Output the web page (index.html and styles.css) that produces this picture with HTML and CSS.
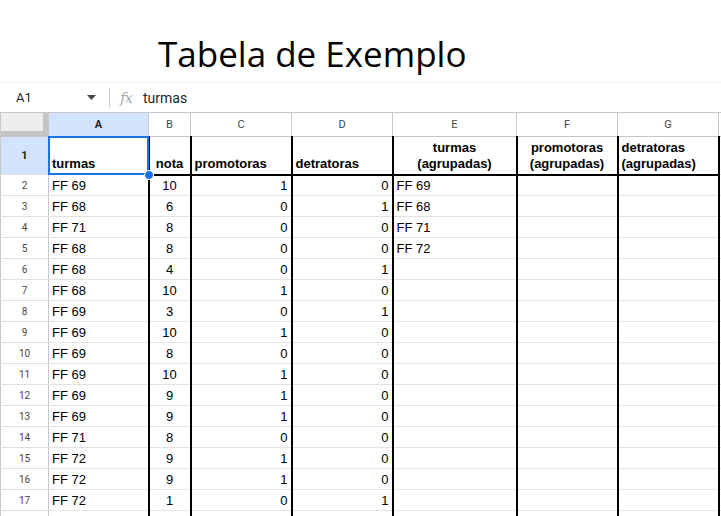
FILE: index.html
```html
<!DOCTYPE html>
<html lang="pt">
<head>
<meta charset="utf-8">
<title>Tabela de Exemplo</title>
<link rel="stylesheet" href="styles.css">
</head>
<body>
<div class="title">Tabela de Exemplo</div>
<div class="fbar">
  <div class="namebox"><span>A1</span>
    <svg class="caret" width="9" height="5" viewBox="0 0 9 5"><path d="M0 0h9L4.5 5z" fill="#444746"/></svg>
  </div>
  <div class="sep"></div>
  <span class="fx">fx</span>
  <span class="ftext">turmas</span>
</div>
<table class="sheet">
  <colgroup>
    <col class="w-rh"><col class="w-a"><col class="w-b"><col class="w-c"><col class="w-d"><col class="w-e"><col class="w-f"><col class="w-g"><col class="w-h">
  </colgroup>
  <tr class="hrow">
    <th class="corner"></th>
    <th class="ch on">A</th><th class="ch">B</th><th class="ch">C</th><th class="ch">D</th><th class="ch">E</th><th class="ch">F</th><th class="ch">G</th><th class="ch"></th>
  </tr>
  <tr class="r1">
    <td class="rh on">1</td>
    <td class="hd sel">turmas<div class="selbox"></div><div class="handle"></div></td>
    <td class="hd k ctr">nota</td>
    <td class="hd k">promotoras</td>
    <td class="hd k">detratoras</td>
    <td class="hd k ctr">turmas<br>(agrupadas)</td>
    <td class="hd k ctr">promotoras<br>(agrupadas)</td>
    <td class="hd k">detratoras<br>(agrupadas)</td>
    <td></td>
  </tr>
  <tr><td class="rh">2</td><td>FF 69</td><td class="k ctr">10</td><td class="k num">1</td><td class="k num">0</td><td class="k">FF 69</td><td class="k"></td><td class="k"></td><td></td></tr>
  <tr><td class="rh">3</td><td>FF 68</td><td class="k ctr">6</td><td class="k num">0</td><td class="k num">1</td><td class="k">FF 68</td><td class="k"></td><td class="k"></td><td></td></tr>
  <tr><td class="rh">4</td><td>FF 71</td><td class="k ctr">8</td><td class="k num">0</td><td class="k num">0</td><td class="k">FF 71</td><td class="k"></td><td class="k"></td><td></td></tr>
  <tr><td class="rh">5</td><td>FF 68</td><td class="k ctr">8</td><td class="k num">0</td><td class="k num">0</td><td class="k">FF 72</td><td class="k"></td><td class="k"></td><td></td></tr>
  <tr><td class="rh">6</td><td>FF 68</td><td class="k ctr">4</td><td class="k num">0</td><td class="k num">1</td><td class="k"></td><td class="k"></td><td class="k"></td><td></td></tr>
  <tr><td class="rh">7</td><td>FF 68</td><td class="k ctr">10</td><td class="k num">1</td><td class="k num">0</td><td class="k"></td><td class="k"></td><td class="k"></td><td></td></tr>
  <tr><td class="rh">8</td><td>FF 69</td><td class="k ctr">3</td><td class="k num">0</td><td class="k num">1</td><td class="k"></td><td class="k"></td><td class="k"></td><td></td></tr>
  <tr><td class="rh">9</td><td>FF 69</td><td class="k ctr">10</td><td class="k num">1</td><td class="k num">0</td><td class="k"></td><td class="k"></td><td class="k"></td><td></td></tr>
  <tr><td class="rh">10</td><td>FF 69</td><td class="k ctr">8</td><td class="k num">0</td><td class="k num">0</td><td class="k"></td><td class="k"></td><td class="k"></td><td></td></tr>
  <tr><td class="rh">11</td><td>FF 69</td><td class="k ctr">10</td><td class="k num">1</td><td class="k num">0</td><td class="k"></td><td class="k"></td><td class="k"></td><td></td></tr>
  <tr><td class="rh">12</td><td>FF 69</td><td class="k ctr">9</td><td class="k num">1</td><td class="k num">0</td><td class="k"></td><td class="k"></td><td class="k"></td><td></td></tr>
  <tr><td class="rh">13</td><td>FF 69</td><td class="k ctr">9</td><td class="k num">1</td><td class="k num">0</td><td class="k"></td><td class="k"></td><td class="k"></td><td></td></tr>
  <tr><td class="rh">14</td><td>FF 71</td><td class="k ctr">8</td><td class="k num">0</td><td class="k num">0</td><td class="k"></td><td class="k"></td><td class="k"></td><td></td></tr>
  <tr><td class="rh">15</td><td>FF 72</td><td class="k ctr">9</td><td class="k num">1</td><td class="k num">0</td><td class="k"></td><td class="k"></td><td class="k"></td><td></td></tr>
  <tr><td class="rh">16</td><td>FF 72</td><td class="k ctr">9</td><td class="k num">1</td><td class="k num">0</td><td class="k"></td><td class="k"></td><td class="k"></td><td></td></tr>
  <tr><td class="rh">17</td><td>FF 72</td><td class="k ctr">1</td><td class="k num">0</td><td class="k num">1</td><td class="k"></td><td class="k"></td><td class="k"></td><td></td></tr>
  <tr class="rlast"><td class="rh"></td><td></td><td class="k"></td><td class="k"></td><td class="k"></td><td class="k"></td><td class="k"></td><td class="k"></td><td></td></tr>
</table>
</body>
</html>
```
FILE: styles.css
```css
html, body {
  margin: 0;
  padding: 0;
  background: #fff;
}
body {
  width: 721px;
  height: 516px;
  overflow: hidden;
  font-family: "Liberation Sans", Arial, sans-serif;
  color: #000;
}
.title {
  height: 82px;
  box-sizing: border-box;
  padding: 33px 0 0 158px;
  font-family: "Open Sans", Lato, sans-serif;
  font-size: 35px;
  line-height: 42px;
  color: #000;
  white-space: nowrap;
}
.fbar {
  height: 30px;
  box-sizing: border-box;
  border-top: 1px solid #f1f1f1;
  display: flex;
  align-items: center;
}
.namebox {
  width: 109px;
  box-sizing: border-box;
  padding: 0 13px 0 16px;
  display: flex;
  align-items: center;
  justify-content: space-between;
  font-family: Roboto, "Liberation Sans", sans-serif;
  font-size: 13px;
  color: #1f1f1f;
}
.caret {
  display: block;
}
.sep {
  width: 1px;
  height: 19px;
  background: #c7c7c7;
}
.fx {
  margin-left: 10px;
  font-family: "DejaVu Serif", serif;
  font-style: italic;
  font-size: 15px;
  color: #a8abaf;
  letter-spacing: -1px;
}
.ftext {
  margin-left: 11px;
  font-family: Roboto, "Liberation Sans", sans-serif;
  font-size: 14px;
  color: #1f1f1f;
}
.sheet {
  border-collapse: collapse;
  table-layout: fixed;
  width: 818px;
}
.w-rh { width: 48px; }
.w-a { width: 100px; }
.w-b { width: 42px; }
.w-c { width: 101px; }
.w-d { width: 101px; }
.w-e { width: 124px; }
.w-f { width: 101px; }
.w-g { width: 101px; }
.w-h { width: 100px; }
.sheet th,
.sheet td {
  box-sizing: border-box;
}
.hrow th {
  height: 24px;
  padding: 0;
  border: 1px solid #c7c7c7;
  background: #fff;
  font-family: Roboto, "Liberation Sans", sans-serif;
  font-size: 11px;
  line-height: 13px;
  font-weight: normal;
  color: #444746;
  text-align: center;
  vertical-align: middle;
}
.hrow th.corner {
  background: #eeeeee;
  box-shadow: inset -5px -5px 0 #c4c4c4;
}
.hrow th.on {
  background: #d3e3fd;
  color: #1f1f1f;
  font-weight: bold;
}
.sheet td {
  height: 21px;
  padding: 0 3px;
  border: 1px solid #e2e2e2;
  font-size: 13px;
  line-height: 15px;
  white-space: nowrap;
  overflow: hidden;
  vertical-align: middle;
}
.sheet td.rh {
  padding: 0;
  border-color: #e0e0e0 #c7c7c7 #e0e0e0 #c7c7c7;
  font-family: Roboto, "Liberation Sans", sans-serif;
  font-size: 10px;
  color: #444746;
  text-align: center;
}
.sheet td.rh.on {
  background: #d3e3fd;
  color: #1f1f1f;
  font-weight: bold;
  font-size: 11px;
}
.r1 td {
  height: 38px;
}
.sheet td.hd {
  font-weight: bold;
  vertical-align: bottom;
  padding-bottom: 2px;
  line-height: 16px;
  white-space: normal;
}
.sheet td.k {
  border-left: 2px solid #000;
  border-right: 2px solid #000;
}
.r1 td.k {
  border-bottom: 2px solid #000;
}
.ctr { text-align: center; }
.num { text-align: right; }
.sheet td.sel {
  position: relative;
  overflow: visible;
}
.selbox {
  position: absolute;
  left: -1px;
  top: -1px;
  right: -1px;
  bottom: -1px;
  border: 2px solid #1a73e8;
  pointer-events: none;
}
.handle {
  position: absolute;
  right: -6px;
  bottom: -6px;
  width: 8px;
  height: 8px;
  border-radius: 50%;
  background: #1a73e8;
  border: 1px solid #fff;
  z-index: 2;
}
```
